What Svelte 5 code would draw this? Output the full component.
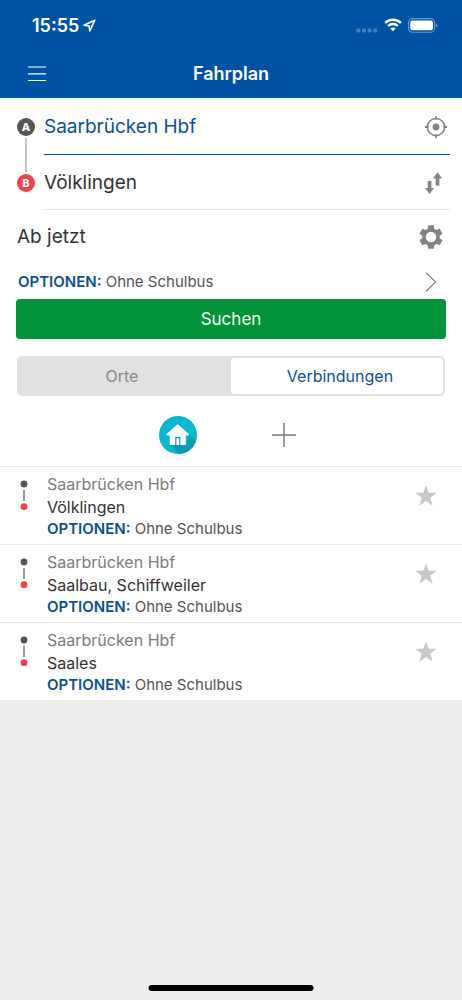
<script>
  let from = $state('Saarbrücken Hbf');
  let to = $state('Völklingen');
  let tab = $state('Verbindungen');
  const tabs = ['Orte', 'Verbindungen'];
  const connections = [
    { from: 'Saarbrücken Hbf', to: 'Völklingen', options: 'Ohne Schulbus' },
    { from: 'Saarbrücken Hbf', to: 'Saalbau, Schiffweiler', options: 'Ohne Schulbus' },
    { from: 'Saarbrücken Hbf', to: 'Saales', options: 'Ohne Schulbus' }
  ];

  function swap() {
    [from, to] = [to, from];
  }
</script>

<div class="app">
  <header>
    <div class="status">
      <span class="time">15:55</span>
      <svg class="location" width="13" height="13" viewBox="0 0 13 13" aria-hidden="true">
        <path d="M11.8 1.2 1 6.2l5 .7.8 5z" fill="none" stroke="#fff" stroke-width="1.6" stroke-linejoin="round" />
      </svg>
      <svg class="signal" width="22" height="5" viewBox="0 0 22 5" aria-hidden="true">
        <g fill="#fff" opacity=".25">
          <rect x="0.3" y="0.5" width="4" height="4" rx="1.3" />
          <rect x="6" y="0.5" width="4" height="4" rx="1.3" />
          <rect x="11.6" y="0.5" width="4" height="4" rx="1.3" />
          <rect x="17.2" y="0.5" width="4" height="4" rx="1.3" />
        </g>
      </svg>
      <svg class="wifi" width="18" height="14" viewBox="0 0 18 14" aria-hidden="true">
        <path d="M1.1 4.9a11.3 11.3 0 0 1 15.8 0" fill="none" stroke="#fff" stroke-width="2.5" />
        <path d="M4.1 8a7 7 0 0 1 9.8 0" fill="none" stroke="#fff" stroke-width="2.3" />
        <path d="M6.4 10.6a3.8 3.8 0 0 1 5.2 0L9 13.3z" fill="#fff" />
      </svg>
      <svg class="battery" width="30" height="15" viewBox="0 0 30 15" aria-hidden="true">
        <rect x="0.6" y="0.6" width="26" height="13.6" rx="4" fill="none" stroke="#fff" stroke-opacity=".4" stroke-width="1.1" />
        <rect x="2.2" y="2.6" width="22.8" height="9.6" rx="2.2" fill="#fff" />
        <path d="M28 5.2c2 .8 2 3.600 0 4.400z" fill="#fff" opacity=".45" />
      </svg>
    </div>
    <div class="nav">
      <button class="icon-button menu" aria-label="Menü">
        <svg width="18" height="16" viewBox="0 0 18 16">
          <path d="M0 1h18M0 7.800h18M0 14.500h18" stroke="#fff" stroke-width="1.200" />
        </svg>
      </button>
      <h1>Fahrplan</h1>
    </div>
  </header>

  <main>
    <form onsubmit={(e) => e.preventDefault()}>
      <div class="route">
        <div class="track" aria-hidden="true">
          <span class="point start">A</span>
          <span class="line"></span>
          <span class="point end">B</span>
        </div>
        <div class="fields">
          <div class="field active">
            <input class="from" aria-label="Start" bind:value={from} />
            <button type="button" class="icon-button" aria-label="Aktueller Standort">
              <svg width="24" height="24" viewBox="0 0 24 24" fill="none" stroke="#848484">
                <circle cx="12" cy="12" r="8.600" stroke-width="1.500" />
                <circle cx="12" cy="12" r="3.400" fill="#848484" stroke="none" />
                <path d="M12 1v3.500M12 19.500V23M1 12h3.500M19.500 12H23" stroke-width="1.800" />
              </svg>
            </button>
          </div>
          <div class="field">
            <input aria-label="Ziel" bind:value={to} />
            <button type="button" class="icon-button swap" aria-label="Richtung tauschen" onclick={swap}>
              <svg width="20" height="24" viewBox="0 0 20 24" fill="#848484">
                <path d="M3.700 10h3.700v7h2.600l-4.500 6L1 17h2.700z" />
                <path d="M13.500 1.300 18.100 7.500h-2.700v7h-3.700v-7H9z" />
              </svg>
            </button>
          </div>
        </div>
      </div>

      <div class="when">
        <button type="button" class="when-label">Ab jetzt</button>
        <button type="button" class="icon-button" aria-label="Einstellungen">
          <svg width="28" height="28" viewBox="0 0 24 24" fill="#848484">
            <path d="M19.430 12.980c.04-.32.07-.64.07-.98s-.03-.66-.07-.98l2.110-1.650c.19-.15.24-.42.12-.64l-2-3.460c-.12-.22-.39-.3-.61-.22l-2.490 1c-.52-.4-1.080-.73-1.690-.98l-.38-2.650C14.460 2.180 14.250 2 14 2h-4c-.25 0-.46.18-.49.42l-.38 2.650c-.61.25-1.170.59-1.690.98l-2.490-1c-.23-.09-.49 0-.61.22l-2 3.460c-.13.22-.07.49.12.64l2.110 1.650c-.04.32-.07.65-.07.98s.03.66.07.98l-2.110 1.650c-.19.15-.24.42-.12.64l2 3.460c.12.22.39.3.61.22l2.490-1c.52.4 1.080.73 1.690.98l.38 2.650c.03.24.24.42.49.42h4c.25 0 .46-.18.49-.42l.38-2.650c.61-.25 1.170-.59 1.690-.98l2.490 1c.23.09.49 0 .61-.22l2-3.460c.12-.22.07-.49-.12-.64zM12 16.500a4.500 4.500 0 1 1 0-9 4.500 4.500 0 0 1 0 9z" />
          </svg>
        </button>
      </div>

      <button type="button" class="options-row">
        <span class="options"><b>OPTIONEN:</b> Ohne Schulbus</span>
        <svg width="12" height="20" viewBox="0 0 12 20" aria-hidden="true">
          <path d="M1 .7 10.600 10 1 19.300" fill="none" stroke="#777" stroke-width="1.100" />
        </svg>
      </button>

      <button type="submit" class="search">Suchen</button>
    </form>

    <div class="tabs" role="tablist">
      {#each tabs as name}
        <button role="tab" aria-selected={tab === name} class:selected={tab === name} onclick={() => (tab = name)}>{name}</button>
      {/each}
    </div>

    <div class="shortcuts">
      <button class="icon-button" aria-label="Zuhause">
        <svg width="38" height="38" viewBox="0 0 38 38">
          <circle cx="19" cy="19" r="19" fill="#06b8d6" />
          <path d="M30.200 18.500 37.300 24.500A19 19 0 0 1 19.500 38L10.600 29h16.300z" fill="#069fb8" />
          <path d="M18.700 8 30.200 18.200 29 19.400h-2.200V29H10.700V19.400H8.500L7.200 18.200z" fill="#fff" />
          <path d="M16.800 29v-7.400h4V29" fill="#fff" stroke="#069fb8" stroke-width="1.200" />
        </svg>
      </button>
      <button class="icon-button" aria-label="Hinzufügen">
        <svg width="24" height="24" viewBox="0 0 24 24">
          <path d="M12 0v24M0 12h24" stroke="#777" stroke-width="1.400" />
        </svg>
      </button>
    </div>

    <ul>
      {#each connections as c}
        <li>
          <svg class="mini" width="8" height="31" viewBox="0 0 8 31" aria-hidden="true">
            <circle cx="4" cy="4" r="3.400" fill="#555" />
            <path d="M4 10v11" stroke="#777" stroke-width="1.500" />
            <circle cx="4" cy="26.700" r="3.400" fill="#f3404b" />
          </svg>
          <div class="info">
            <span class="origin">{c.from}</span>
            <span class="target">{c.to}</span>
            <span class="options"><b>OPTIONEN:</b> {c.options}</span>
          </div>
          <button class="icon-button" aria-label="Favorit">
            <svg width="24" height="24" viewBox="0 0 24 24">
              <path d="M12 1.300 14.700 8.800h8L16.300 13.700 18.700 21.700 12 17 5.300 21.700 7.700 13.700 1.300 8.800h8z" fill="#c8c8c8" />
            </svg>
          </button>
        </li>
      {/each}
    </ul>
  </main>
  <div class="home-bar"></div>
</div>

<style>
  :global(body) {
    margin: 0;
    background: #ededed;
  }
  .app {
    min-height: 100vh;
    font-family: Inter, 'Liberation Sans', sans-serif;
    color: #333;
    background: #ededed;
  }
  button,
  input {
    font: inherit;
    color: inherit;
    border: 0;
    padding: 0;
    margin: 0;
    background: none;
    outline: none;
  }
  button {
    cursor: pointer;
  }
  svg {
    display: block;
    flex: none;
  }
  .icon-button {
    display: flex;
    flex: none;
  }
  header {
    background: #0053a4;
    color: #fff;
    box-sizing: border-box;
    height: 98px;
  }
  .status {
    display: flex;
    align-items: center;
    height: 50px;
    padding: 0 24px 0 32px;
  }
  .time {
    font-size: 18px;
    font-weight: 600;
  }
  .location {
    margin-left: 4px;
  }
  .signal {
    margin: 10px 6px 0 auto;
  }
  .wifi {
    margin-right: 6px;
  }
  .nav {
    display: grid;
    grid-template-columns: 1fr auto 1fr;
    align-items: center;
    height: 48px;
    padding: 0 28px;
  }
  .menu {
    justify-self: start;
  }
  h1 {
    margin: 0;
    font-size: 18px;
    line-height: 24px;
    font-weight: 600;
  }
  main {
    background: #fff;
  }
  .route {
    display: flex;
    gap: 9px;
    padding: 0 12px 0 17px;
  }
  .track {
    display: flex;
    flex-direction: column;
    align-items: center;
    padding: 20px 0 18px;
  }
  .point {
    width: 18px;
    height: 18px;
    border-radius: 50%;
    background: #555;
    color: #fff;
    font-size: 11px;
    line-height: 18px;
    font-weight: 800;
    text-align: center;
  }
  .end {
    background: #f3404b;
  }
  .line {
    flex: 1;
    width: 2px;
    margin: 2px 0;
    background: #c4c4c4;
  }
  .fields {
    flex: 1;
    min-width: 0;
  }
  .field {
    display: flex;
    align-items: center;
    box-sizing: border-box;
    height: 55px;
    padding: 2px 2px 0 0;
    border-bottom: 1px solid #e6e6e6;
  }
  .field.active {
    height: 57px;
    border-bottom-color: #0053a4;
  }
  .field input {
    flex: 1;
    min-width: 0;
    font-size: 19px;
    line-height: 24px;
  }
  .field .from {
    color: #0d4f9b;
  }
  .swap {
    margin-right: 4px;
  }
  .when {
    display: flex;
    align-items: center;
    justify-content: space-between;
    height: 54px;
    padding: 0 17px;
  }
  .when-label {
    font-size: 19px;
    line-height: 24px;
  }
  .options-row {
    display: flex;
    align-items: center;
    justify-content: space-between;
    width: 100%;
    height: 35px;
    padding: 0 25px 0 18px;
  }
  .options {
    font-size: 15px;
    line-height: 20px;
    color: #555;
  }
  b {
    font-weight: 600;
    color: #0d4f9b;
  }
  .search {
    display: block;
    width: calc(100% - 32px);
    height: 40px;
    margin: 0 16px;
    border-radius: 4px;
    background: #03943a;
    color: #fff;
    font-size: 17px;
  }
  .tabs {
    display: flex;
    margin: 17px 17px 20px;
    padding: 2px;
    border-radius: 5px;
    background: #e1e1e1;
  }
  .tabs button {
    flex: 1 1 0;
    height: 36px;
    padding: 0 0 0 6px;
    border-radius: 3px;
    color: #8a8a8a;
    font-size: 16px;
  }
  .tabs button:first-child {
    padding: 0 6px 0 0;
  }
  .tabs .selected {
    background: #fff;
    color: #0d4f9b;
  }
  .shortcuts {
    display: flex;
    align-items: center;
    justify-content: center;
    gap: 75px;
    padding: 0 7px 12px 0;
  }
  ul {
    margin: 0;
    padding: 0;
    list-style: none;
  }
  li {
    display: flex;
    align-items: flex-start;
    box-sizing: border-box;
    height: 78px;
    padding: 6px 24px 0 20px;
    border-top: 1px solid #e9e9e9;
  }
  .mini {
    margin: 7px 19px 0 0;
  }
  .info {
    display: flex;
    flex: 1;
    flex-direction: column;
  }
  .origin,
  .target {
    font-size: 16px;
    line-height: 23px;
  }
  .origin {
    color: #7d7d7d;
  }
  li .icon-button {
    margin-top: 11px;
  }
  .home-bar {
    position: fixed;
    bottom: 9px;
    left: 50%;
    width: 165px;
    height: 6px;
    border-radius: 3px;
    background: #000;
    transform: translateX(-50%);
  }
</style>
